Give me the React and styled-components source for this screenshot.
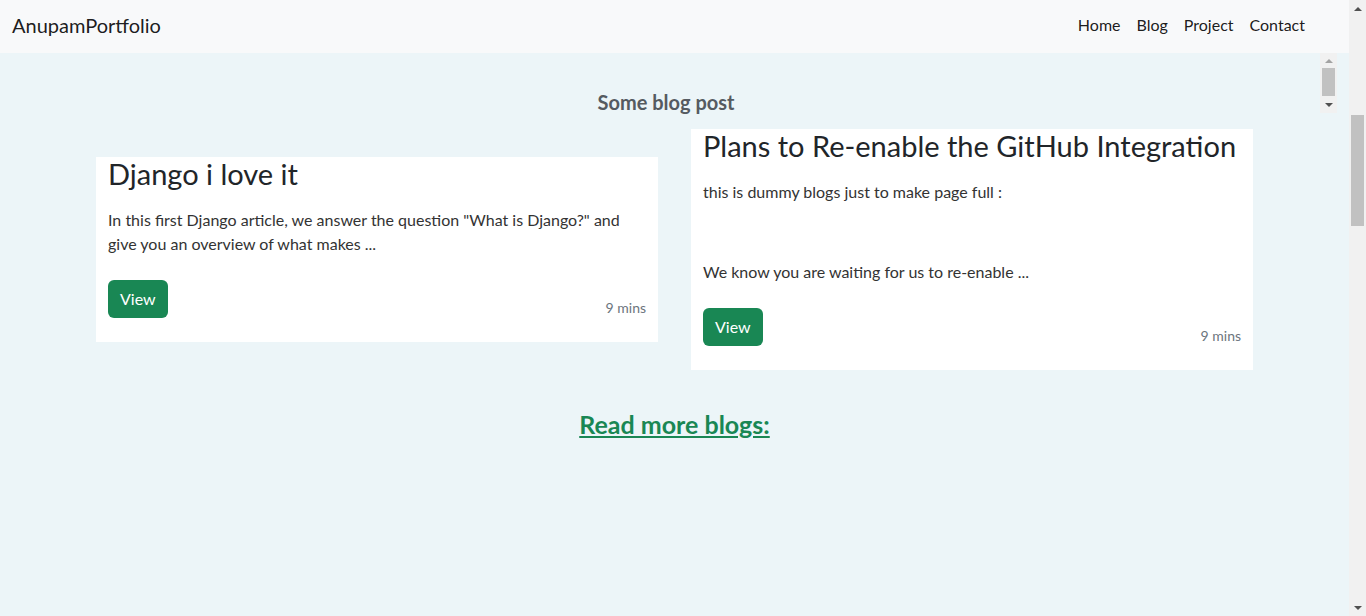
import React from 'react';
import styled, { createGlobalStyle, css } from 'styled-components';

const GlobalStyle = createGlobalStyle`
  body {
    margin: 0;
    background: #ecf5f8;
    font-family: Lato, "Open Sans", "Liberation Sans", sans-serif;
    color: #212529;
  }
`;

// page shell: content column + a drawn window scrollbar on the right
const Shell = styled.div`
  display: flex;
  height: 100vh;
  overflow: hidden;
`;

const Page = styled.div`
  flex: 1;
  min-width: 0;
`;

const ScrollBar = styled.div`
  display: flex;
  flex-direction: column;
  width: 17px;
  flex: 0 0 17px;
  background: #f1f1f1;
`;

const Arrow = styled.div`
  flex: 0 0 ${({ $h }) => $h || 17}px;
  display: flex;
  align-items: center;
  justify-content: center;

  &::before {
    content: '';
    width: 0;
    height: 0;
    border-left: 4px solid transparent;
    border-right: 4px solid transparent;
    ${({ $down, $color }) =>
      $down
        ? css`border-top: 4px solid ${$color || '#505050'};`
        : css`border-bottom: 4px solid ${$color || '#505050'};`}
  }
`;

const Track = styled.div`
  flex: 1;
  padding-top: ${({ $offset }) => $offset || 0}px;
`;

const Thumb = styled.div`
  height: ${({ $size }) => ($size ? `${$size}px` : '100%')};
  margin: 0 2px;
  background: #c1c1c1;
`;

const Navbar = styled.nav`
  box-sizing: border-box;
  height: 53px;
  display: flex;
  align-items: center;
  justify-content: space-between;
  padding: 0 36px 4px 12px;
  background: #f8f9fa;
`;

const Brand = styled.a`
  font-size: 20px;
  color: rgba(0, 0, 0, 0.9);
  text-decoration: none;
`;

const NavLinks = styled.div`
  display: flex;
`;

const NavLink = styled.a`
  padding: 0 8px;
  font-size: 16px;
  line-height: 24px;
  color: rgba(0, 0, 0, 0.9);
  text-decoration: none;
`;

const HeaderRow = styled.div`
  display: grid;
  grid-template-columns: 1fr 17px;
  align-items: start;
  padding-right: 12px;
`;

const SectionTitle = styled.h2`
  margin: 37px 0 0;
  padding-left: 12px;
  text-align: center;
  font-size: 20px;
  line-height: 24px;
  font-weight: 700;
  color: #555b61;
`;

const StubBar = styled(ScrollBar)`
  height: 60px;
`;

const CardRow = styled.div`
  display: flex;
  justify-content: center;
  align-items: center;
  gap: 33px;
  margin-top: 15px;
`;

const Card = styled.article`
  flex: 0 0 562px;
  box-sizing: border-box;
  background: #fff;
  padding: 0 12px 24px;
`;

const CardTitle = styled.h3`
  margin: 0 0 16px;
  font-size: 29px;
  line-height: 1.2;
  font-weight: 400;
  color: #212529;
`;

const CardText = styled.p`
  margin: 0 0 16px;
  font-size: 16px;
  line-height: 24px;
  color: #333;
`;

const CardFooter = styled.div`
  display: flex;
  justify-content: space-between;
  align-items: flex-end;
  margin-top: 24px;
`;

const ViewButton = styled.a`
  display: inline-block;
  padding: 7px 12px;
  border-radius: 6px;
  background: #198754;
  color: #fff;
  font-size: 16px;
  line-height: 24px;
  text-decoration: none;
`;

const ReadTime = styled.small`
  font-size: 14px;
  line-height: 21px;
  color: #6c757d;
`;

const ReadMore = styled.h4`
  margin: 39px 0 0;
  text-align: center;
  font-size: 25px;
  line-height: 1.2;
  font-weight: 700;

  a {
    color: #198754;
  }
`;

const posts = [
  {
    title: 'Django i love it',
    body: ['In this first Django article, we answer the question "What is Django?" and give you an overview of what makes ...'],
    time: '9 mins',
  },
  {
    title: 'Plans to Re-enable the GitHub Integration',
    body: ['this is dummy blogs just to make page full :', '\u00a0', 'We know you are waiting for us to re-enable ...'],
    time: '9 mins',
  },
];

const App = () => {
  return (
    <Shell>
      <GlobalStyle />
      <Page>
        <Navbar>
          <Brand href="#">AnupamPortfolio</Brand>
          <NavLinks>
            <NavLink href="#">Home</NavLink>
            <NavLink href="#">Blog</NavLink>
            <NavLink href="#">Project</NavLink>
            <NavLink href="#">Contact</NavLink>
          </NavLinks>
        </Navbar>
        <main>
          <HeaderRow>
            <SectionTitle>Some blog post</SectionTitle>
            <StubBar>
              <Arrow $h={15} $color="#a3a3a3" />
              <Track>
                <Thumb />
              </Track>
              <Arrow $down />
            </StubBar>
          </HeaderRow>
          <CardRow>
            {posts.map((post) => (
              <Card key={post.title}>
                <CardTitle>{post.title}</CardTitle>
                {post.body.map((line, i) => (
                  <CardText key={i}>{line}</CardText>
                ))}
                <CardFooter>
                  <ViewButton href="#">View</ViewButton>
                  <ReadTime>{post.time}</ReadTime>
                </CardFooter>
              </Card>
            ))}
          </CardRow>
          <ReadMore>
            <a href="#">Read more blogs:</a>
          </ReadMore>
        </main>
      </Page>
      <ScrollBar>
        <Arrow />
        <Track $offset={98}>
          <Thumb $size={111} />
        </Track>
        <Arrow $down />
      </ScrollBar>
    </Shell>
  );
};

export default App;
